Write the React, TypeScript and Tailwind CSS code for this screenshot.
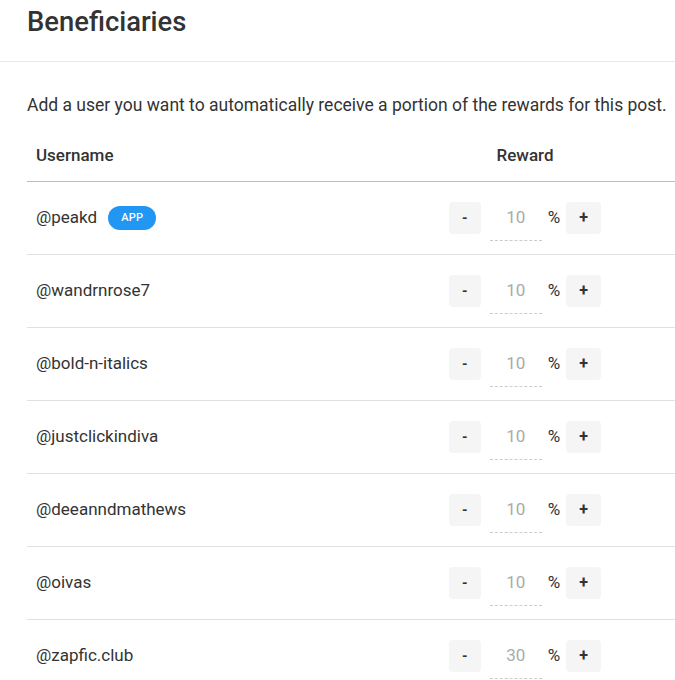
const rows = [
  { name: '@peakd', pct: 10, app: true },
  { name: '@wandrnrose7', pct: 10 },
  { name: '@bold-n-italics', pct: 10 },
  { name: '@justclickindiva', pct: 10 },
  { name: '@deeanndmathews', pct: 10 },
  { name: '@oivas', pct: 10 },
  { name: '@zapfic.club', pct: 30 },
];

export default function App() {
  return (
    <div className="w-[675px] h-[680px] overflow-hidden bg-white text-[#333] font-['Roboto',sans-serif]">
      <div className="border-b border-[#e8e8e8] pl-[27px] pt-[6px] h-[62px]">
        <h1 className="text-[27.4px] leading-[32px] font-medium text-[#333]">Beneficiaries</h1>
      </div>
      <div className="pl-[27px]">
        <p className="mt-[31px] text-[17.5px] leading-[24px] whitespace-nowrap">
          Add a user you want to automatically receive a portion of the rewards for this post.
        </p>
        <div className="mt-[13px] w-[700px]">
          <div className="grid grid-cols-[398px_200px_1fr] h-[52px] items-center border-b border-[#bdbdbd] text-[17px] font-medium">
            <div className="pl-[9px]">Username</div>
            <div className="text-center">Reward</div>
            <div />
          </div>
          {rows.map((r) => (
            <div key={r.name} className="grid grid-cols-[398px_200px_1fr] h-[73px] items-center border-b border-[#e0e0e0] text-[17px]">
              <div className="pl-[9px] flex items-center gap-[11px]">
                <span>{r.name}</span>
                {r.app && (
                  <span className="bg-[#2196f3] text-white text-[11px] font-medium rounded-full px-[13px] h-[24px] flex items-center tracking-wide">APP</span>
                )}
              </div>
              <div className="flex items-center justify-center">
                <button className="w-[32px] h-[32px] rounded-[4px] bg-[#f5f5f5] text-[14px] font-bold text-[#333] flex items-center justify-center">-</button>
                <div className="w-[52px] h-[46px] ml-[9px] border-b border-dashed border-[#ccc] flex items-center justify-center text-[17px] text-[#aaa]">
                  {r.pct}
                </div>
                <span className="ml-[6px] text-[17px] text-[#333]">%</span>
                <button className="ml-[6px] w-[35px] h-[32px] rounded-[4px] bg-[#f5f5f5] text-[16px] font-bold text-[#333] flex items-center justify-center">+</button>
              </div>
              <div />
            </div>
          ))}
        </div>
      </div>
    </div>
  );
}
